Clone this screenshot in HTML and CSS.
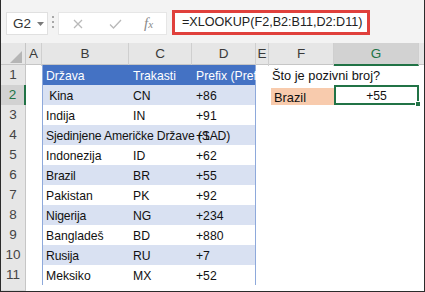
FILE: index.html
```html
<!DOCTYPE html>
<html>
<head>
<meta charset="utf-8">
<link rel="stylesheet" href="styles.css">
</head>
<body>
<div class="frame">
  <div class="toolbar">
    <div class="namebox"><span class="nb-text">G2</span><svg class="nb-arrow" width="7" height="4" viewBox="0 0 7 4"><path d="M0 0H7L3.5 4Z" fill="#7a7a7a"/></svg></div>
    <div class="vdots"><i></i><i></i><i></i></div>
    <div class="fbuttons">
      <svg class="ic-x" width="10" height="10" viewBox="0 0 10 10"><path d="M1 1L9 9M9 1L1 9" stroke="#b9b9b9" stroke-width="1.3" fill="none"/></svg>
      <svg class="ic-check" width="13" height="10" viewBox="0 0 13 10"><path d="M1 5.5L4.5 9L12 1" stroke="#b9b9b9" stroke-width="1.3" fill="none"/></svg>
      <span class="ic-fx">f<small>x</small></span>
    </div>
    <div class="formula">=XLOOKUP(F2,B2:B11,D2:D11)</div>
  </div>

  <div class="sheet">
    <div class="hrow">
      <div class="corner"><svg width="12" height="12" viewBox="0 0 12 12"><path d="M12 0V12H0Z" fill="#b5b5b5"/></svg></div>
      <div class="ch">A</div>
      <div class="ch">B</div>
      <div class="ch">C</div>
      <div class="ch">D</div>
      <div class="ch">E</div>
      <div class="ch">F</div>
      <div class="ch sel">G</div>
      <div class="ch last"></div>
    </div>

    <div class="row">
      <div class="rh">1</div><div class="ca"></div>
      <div class="tb head"><div class="c">Država</div><div class="c">Trakasti</div><div class="c clip">Prefix (Prefiks)</div></div>
      <div class="ce"></div><div class="cf">Što je pozivni broj?</div><div class="cg"></div><div class="ch2"></div>
    </div>
    <div class="row">
      <div class="rh selrow">2</div><div class="ca"></div>
      <div class="tb band"><div class="c">&nbsp;Kina</div><div class="c">CN</div><div class="c">+86</div></div>
      <div class="ce"></div><div class="cf"><div class="orange">Brazil</div></div><div class="cg"><div class="active">+55<span class="handle"></span></div></div><div class="ch2"></div>
    </div>
    <div class="row">
      <div class="rh">3</div><div class="ca"></div>
      <div class="tb"><div class="c">Indija</div><div class="c">IN</div><div class="c">+91</div></div>
      <div class="ce"></div><div class="cf"></div><div class="cg"></div><div class="ch2"></div>
    </div>
    <div class="row">
      <div class="rh">4</div><div class="ca"></div>
      <div class="tb band"><div class="c">Sjedinjene Američke Države (SAD)</div><div class="c"></div><div class="c">+1</div></div>
      <div class="ce"></div><div class="cf"></div><div class="cg"></div><div class="ch2"></div>
    </div>
    <div class="row">
      <div class="rh">5</div><div class="ca"></div>
      <div class="tb"><div class="c">Indonezija</div><div class="c">ID</div><div class="c">+62</div></div>
      <div class="ce"></div><div class="cf"></div><div class="cg"></div><div class="ch2"></div>
    </div>
    <div class="row">
      <div class="rh">6</div><div class="ca"></div>
      <div class="tb band"><div class="c">Brazil</div><div class="c">BR</div><div class="c">+55</div></div>
      <div class="ce"></div><div class="cf"></div><div class="cg"></div><div class="ch2"></div>
    </div>
    <div class="row">
      <div class="rh">7</div><div class="ca"></div>
      <div class="tb"><div class="c">Pakistan</div><div class="c">PK</div><div class="c">+92</div></div>
      <div class="ce"></div><div class="cf"></div><div class="cg"></div><div class="ch2"></div>
    </div>
    <div class="row">
      <div class="rh">8</div><div class="ca"></div>
      <div class="tb band"><div class="c">Nigerija</div><div class="c">NG</div><div class="c">+234</div></div>
      <div class="ce"></div><div class="cf"></div><div class="cg"></div><div class="ch2"></div>
    </div>
    <div class="row">
      <div class="rh">9</div><div class="ca"></div>
      <div class="tb"><div class="c">Bangladeš</div><div class="c">BD</div><div class="c">+880</div></div>
      <div class="ce"></div><div class="cf"></div><div class="cg"></div><div class="ch2"></div>
    </div>
    <div class="row">
      <div class="rh">10</div><div class="ca"></div>
      <div class="tb band"><div class="c">Rusija</div><div class="c">RU</div><div class="c">+7</div></div>
      <div class="ce"></div><div class="cf"></div><div class="cg"></div><div class="ch2"></div>
    </div>
    <div class="row">
      <div class="rh">11</div><div class="ca"></div>
      <div class="tb"><div class="c">Meksiko</div><div class="c">MX</div><div class="c">+52</div></div>
      <div class="ce"></div><div class="cf"></div><div class="cg"></div><div class="ch2"></div>
    </div>
    <div class="row partial">
      <div class="rh"></div><div class="ca"></div>
      <div class="tb empty"></div>
      <div class="ce"></div><div class="cf"></div><div class="cg"></div><div class="ch2"></div>
    </div>
  </div>
</div>
</body>
</html>
```

FILE: styles.css
```css
* { box-sizing: border-box; }
html, body { margin: 0; padding: 0; background: #ffffff; }
body { width: 425px; height: 292px; overflow: hidden; font-family: "Liberation Sans", Arial, sans-serif; }

.frame {
  width: 425px;
  height: 292px;
  border: 1px solid #2b2b2b;
  border-top: none;
  overflow: hidden;
  display: flex;
  flex-direction: column;
}

/* toolbar */
.toolbar {
  height: 43px;
  flex: none;
  background: #f3f3f3;
  display: flex;
  align-items: flex-start;
  padding-left: 5px;
}
.namebox {
  margin-top: 12px;
  width: 42px;
  height: 23px;
  background: #fff;
  border: 1px solid #e0e0e0;
  display: flex;
  align-items: center;
  padding-left: 6px;
  gap: 6px;
}
.nb-text { font-size: 13.5px; color: #333; }
.vdots {
  margin-top: 16px;
  margin-left: 4px;
  width: 3px;
  display: flex;
  flex-direction: column;
  gap: 3px;
}
.vdots i { display: block; width: 2px; height: 2px; background: #a8a8a8; }
.fbuttons {
  margin-left: 3px;
  margin-top: 12px;
  width: 109px;
  height: 23px;
  background: #fff;
  border: 1px solid #e6e6e6;
  display: flex;
  align-items: center;
  padding-left: 14px;
}
.ic-x { margin-right: 26px; }
.ic-check { margin-right: 22px; }
.ic-fx { font-family: "Liberation Serif", serif; font-style: italic; font-size: 15px; color: #8a8a8a; }
.ic-fx small { font-size: 11px; }
.formula {
  margin-top: 10px;
  margin-left: 5px;
  width: 198px;
  height: 25px;
  background: #fff;
  border: 3px solid #e0403c;
  font-size: 12.6px;
  color: #222;
  line-height: 19px;
  padding-left: 7px;
  white-space: nowrap;
}

/* sheet */
.sheet { flex: 1; display: flex; flex-direction: column; background: #fff; }
.hrow {
  height: 22px;
  display: grid;
  grid-template-columns: 25px 16px 87px 63px 64px 13px 65px 85px 1fr;
  background: #e6e6e6;
  border-bottom: 1px solid #c6c6c6;
}
.corner { display: flex; align-items: flex-end; justify-content: flex-end; padding: 0 3px 3px 0; border-right: 1px solid #c6c6c6; }
.ch {
  border-right: 1px solid #cfcfcf;
  text-align: center;
  font-size: 13.5px;
  color: #3a3a3a;
  line-height: 22px;
}
.ch.sel { background: #d2d2d2; border-bottom: 2px solid #217346; color: #217346; line-height: 21px; }
.ch.last { border-right: none; }

.row {
  height: 20px;
  display: grid;
  grid-template-columns: 25px 16px 214px 13px 65px 85px 1fr;
  font-size: 12.2px;
  color: #111;
}
.row.partial { height: 6px; }
.rh {
  background: #e6e6e6;
  border-right: 1px solid #c6c6c6;
  border-bottom: 1px solid #d6d6d6;
  text-align: center;
  font-size: 13.5px;
  color: #444;
  line-height: 20px;
}
.rh.selrow { background: #d2d2d2; border-right: 2px solid #217346; color: #217346; }

.tb {
  display: grid;
  grid-template-columns: 87px 63px 64px;
  border-left: 1px solid #8ea9db;
  border-right: 1px solid #8ea9db;
  border-bottom: 1px solid #8ea9db;
  background: #fff;
  font-size: 12.2px;
}
.tb.band { background: #d9e1f2; }
.tb.head { background: #4472c4; color: #fff; }
.tb.empty { border: none; }
.c {
  white-space: nowrap;
  padding-left: 3px;
  line-height: 20px;
  padding-top: 1px;
  overflow: visible;
}
.tb.band .c:first-child { letter-spacing: -0.15px; }
.c.clip { overflow: hidden; }

.cf { white-space: nowrap; padding-left: 3px; line-height: 20px; padding-top: 1px; font-size: 12.8px; }
.orange {
  margin: 2px 0 0 -1px;
  height: 17px;
  background: #f8cbad;
  line-height: 19px;
  padding-left: 3px;
}
.cg { padding: 0; }
.active {
  position: relative;
  height: 20px;
  border: 2px solid #217346;
  text-align: center;
  line-height: 16px;
  padding-top: 1px;
}
.handle {
  position: absolute;
  right: -4px;
  bottom: -4px;
  width: 6px;
  height: 6px;
  background: #217346;
  border: 1px solid #fff;
}
```
